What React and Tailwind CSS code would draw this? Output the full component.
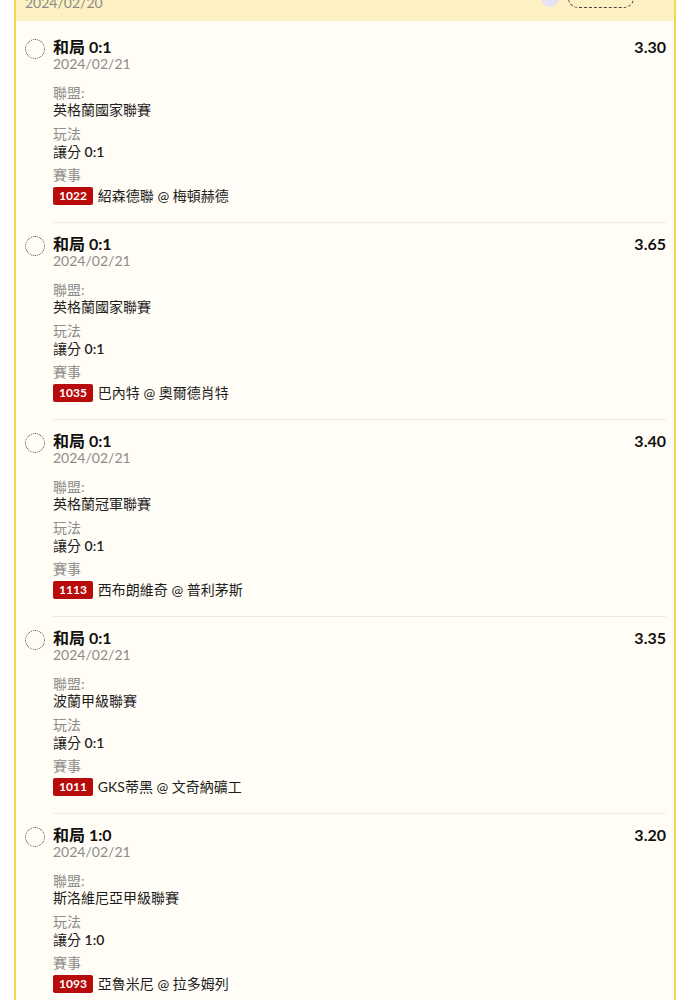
import React from 'react'

const bets = [
    { pick: '和局 0:1', odds: '3.30', league: '英格蘭國家聯賽', line: '0:1', no: '1022', match: '紹森德聯 @ 梅頓赫德' },
    { pick: '和局 0:1', odds: '3.65', league: '英格蘭國家聯賽', line: '0:1', no: '1035', match: '巴內特 @ 奧爾德肖特' },
    { pick: '和局 0:1', odds: '3.40', league: '英格蘭冠軍聯賽', line: '0:1', no: '1113', match: '西布朗維奇 @ 普利茅斯' },
    { pick: '和局 0:1', odds: '3.35', league: '波蘭甲級聯賽', line: '0:1', no: '1011', match: 'GKS蒂黑 @ 文奇納礦工' },
    { pick: '和局 1:0', odds: '3.20', league: '斯洛維尼亞甲級聯賽', line: '1:0', no: '1093', match: '亞魯米尼 @ 拉多姆列' },
]

const BetRow = ({ bet }) => {
    return (
        <div className="flex gap-[8px] pl-[9px] pr-[8px] pt-[12px]">
            <div className="mt-[1px] h-[20px] w-[20px] shrink-0 rounded-full border border-dotted border-[#444]" />
            <div className="flex-1 border-b border-[#efebe0] pb-[17px]">
                <div className="flex justify-between">
                    <div className="text-[16px] leading-[18px] font-bold text-[#111]">{bet.pick}</div>
                    <div className="text-[16px] leading-[18px] font-bold text-[#111]">{bet.odds}</div>
                </div>
                <div className="text-[14px] leading-[16px] text-[#8c8c8c]">2024/02/21</div>

                <div className="mt-[13px] flex flex-col gap-[8px] text-[14px] leading-[16px]">
                    <div>
                        <div className="text-[#8c8c8c]">聯盟:</div>
                        <div className="mt-[1px] text-[#1e1e1e]">{bet.league}</div>
                    </div>
                    <div>
                        <div className="text-[#8c8c8c]">玩法</div>
                        <div className="mt-[2px] text-[#1e1e1e]">讓分 <span className="font-semibold">{bet.line}</span></div>
                    </div>
                    <div className="-mt-[1px]">
                        <div className="text-[#8c8c8c]">賽事</div>
                        <div className="mt-[4px] flex items-center gap-[5px] text-[#1e1e1e]">
                            <span className="inline-flex h-[18px] items-center rounded-[2px] bg-[#b80b0b] px-[6px] text-[12px] font-bold text-white">{bet.no}</span>
                            <span>{bet.match}</span>
                        </div>
                    </div>
                </div>
            </div>
        </div>
    )
}

export default function App() {
    return (
        <div className="min-h-screen bg-white" style={{ fontFamily: 'Lato, "Noto Sans CJK TC", sans-serif' }}>
            <div className="ml-[14px] w-[662px] border-x-2 border-[#f5d650]">
                {/* header, scrolled partly out of view */}
                <div className="h-[21px] overflow-hidden bg-[#fdf0c3]">
                    <div className="-mt-[12px] flex items-end justify-between pl-[9px] pr-[40px]">
                        <div className="text-[14px] leading-[24px] text-[#8c8c8c]">2024/02/20</div>
                        <div className="flex items-end gap-[9px] pb-[7px]">
                            <div className="mb-[1px] h-[18px] w-[18px] rounded-full bg-[#e6e2f2]" />
                            <div className="h-[20px] w-[66px] rounded-full border border-dashed border-[#444]" />
                        </div>
                    </div>
                </div>

                <div className="bg-[#fffdf5] pt-[5px]">
                    {bets.map((bet, i) => (
                        <BetRow key={i} bet={bet} />
                    ))}
                </div>
            </div>
        </div>
    )
}
